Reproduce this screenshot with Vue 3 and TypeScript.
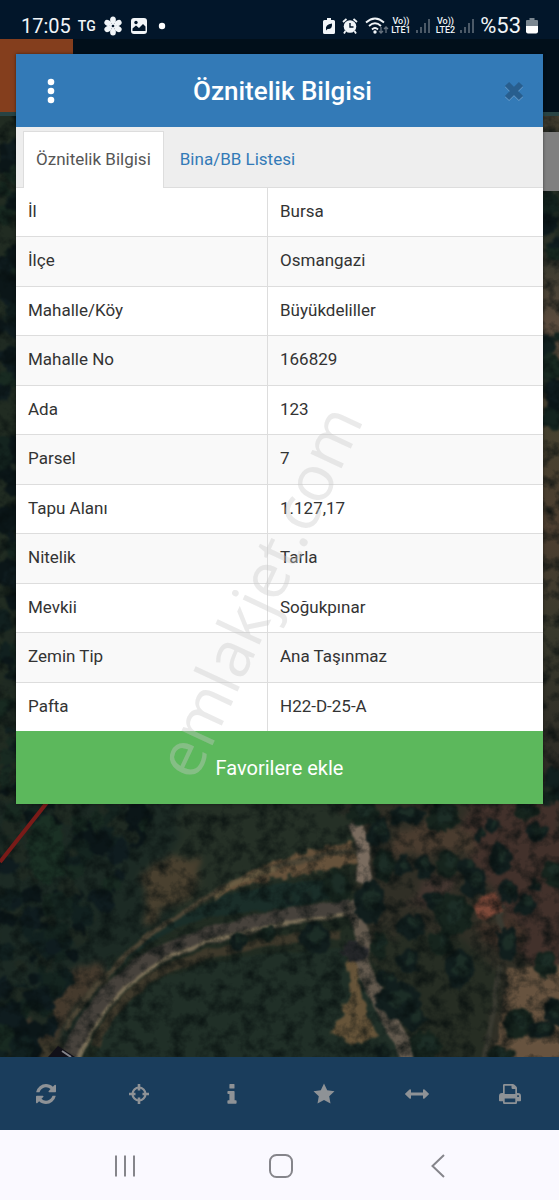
<script setup lang="ts">
import { ref } from 'vue'

interface Attribute {
  label: string
  value: string
}

const attributes: Attribute[] = [
  { label: 'İl', value: 'Bursa' },
  { label: 'İlçe', value: 'Osmangazi' },
  { label: 'Mahalle/Köy', value: 'Büyükdeliller' },
  { label: 'Mahalle No', value: '166829' },
  { label: 'Ada', value: '123' },
  { label: 'Parsel', value: '7' },
  { label: 'Tapu Alanı', value: '1.127,17' },
  { label: 'Nitelik', value: 'Tarla' },
  { label: 'Mevkii', value: 'Soğukpınar' },
  { label: 'Zemin Tip', value: 'Ana Taşınmaz' },
  { label: 'Pafta', value: 'H22-D-25-A' },
]

const tabs: string[] = ['Öznitelik Bilgisi', 'Bina/BB Listesi']
const activeTab = ref<number>(0)

// Tree crowns on the map: x, y, horizontal radius, vertical radius
type Crown = [number, number, number, number]
const crowns: Crown[] = [
  [362, 812, 15, 12], [378, 832, 12, 13], [405, 814, 18, 9], [443, 817, 17, 14],
  [492, 824, 7, 8], [479, 833, 4, 8], [525, 810, 12, 9], [536, 832, 12, 10],
  [500, 858, 11, 17], [382, 865, 11, 16], [401, 865, 9, 11], [423, 867, 10, 12],
  [446, 863, 12, 13], [465, 864, 9, 8], [473, 882, 13, 15], [336, 885, 15, 16],
  [369, 902, 16, 22], [433, 900, 10, 10], [452, 914, 19, 21], [508, 890, 11, 11],
  [525, 904, 10, 10], [554, 873, 13, 13], [534, 885, 6, 6], [410, 925, 14, 14],
  [440, 942, 11, 12], [408, 960, 11, 12], [506, 943, 10, 17], [545, 963, 10, 14],
  [314, 938, 15, 16], [458, 968, 13, 21], [378, 945, 8, 14], [397, 1000, 22, 18],
  [412, 1018, 12, 12], [518, 1023, 15, 16], [540, 1030, 11, 10], [554, 1012, 10, 15],
  [425, 1045, 16, 14], [383, 1051, 8, 8], [237, 941, 9, 8], [267, 933, 8, 7],
  [290, 900, 6, 5], [306, 895, 6, 6], [500, 1055, 14, 9], [385, 978, 10, 9],
]

// Small repeatable generator, so the woodland keeps its shape on every render
let seed = 17
function random(): number {
  seed = (seed * 16807) % 2147483647
  return seed / 2147483647
}

interface Blob { x: number; y: number; r: number; fill: string }
const shades: string[] = ['#0b1618', '#11201f', '#182a21', '#14241f', '#1f2a22', '#0f1c1f']
const woodland: Blob[] = Array.from({ length: 150 }, () => {
  const y = 800 + random() * 250
  const reach = 158 - (y - 800) * 0.5
  return { x: random() * reach, y, r: 4 + random() * 9, fill: shades[Math.floor(random() * 6)] }
})
const edges: Blob[] = Array.from({ length: 170 }, (_, i) => ({
  x: i % 2 ? 543 + random() * 18 : random() * 18,
  y: 115 + random() * 690,
  r: 4 + random() * 9,
  fill: shades[Math.floor(random() * 6)],
})).filter((b) => b.x < 100 || (b.y > 190 && b.y < 270) || (b.y > 335 && b.y < 420 && b.y % 50 > 15) || b.y > 770)
</script>

<template>
  <div class="screen">
    <div class="status">
      <div class="status-side">
        <span class="clock">17:05</span>
        <span class="tg">TG</span>
        <svg width="20" height="20" viewBox="0 0 20 20" fill="#f1f5f8">
          <g v-for="n in 6" :key="n" :transform="`rotate(${n * 60} 10 10)`">
            <ellipse cx="10" cy="4" rx="2.9" ry="3.6" />
            <path d="M9 6h2v3H9z" />
          </g>
          <circle cx="10" cy="10" r="3" />
          <circle cx="10" cy="10" r="1.3" fill="#02162a" />
        </svg>
        <svg width="18" height="18" viewBox="0 0 18 18">
          <rect x="1" y="1" width="16" height="16" rx="3" fill="#f1f5f8" />
          <circle cx="6" cy="5.5" r="1.7" fill="#02162a" />
          <path d="M2.5 14v-2.5l3.5-3 3 2.5 4-4 2.500 2.500V14z" fill="#02162a" />
        </svg>
        <svg class="dot" width="8" height="8" viewBox="0 0 8 8"><circle cx="4" cy="4" r="3.200" fill="#fff" /></svg>
      </div>
      <div class="status-side right">
        <svg width="12" height="18" viewBox="0 0 12 18">
          <path d="M4 1h4v2h2.500q1.500 0 1.500 1.500v11q0 1.500-1.500 1.500h-9Q0 17 0 15.500v-11Q0 3 1.500 3H4z" fill="#f1f5f8" />
          <path d="M3 12.500q-1-5 6-6 .5 6-4.500 5.500L3 13.500z" fill="#02162a" />
        </svg>
        <svg class="alarm" width="16" height="18" viewBox="0 0 16 18">
          <circle cx="8" cy="9.500" r="6.300" fill="#f1f5f8" />
          <path d="M1 5l3.500-3M15 5l-3.500-3M3.500 14L2 16.500M12.500 14l1.500 2.500" stroke="#f1f5f8" stroke-width="1.800" fill="none" />
          <path d="M8 6v4h3.500" stroke="#02162a" stroke-width="1.400" fill="none" />
        </svg>
        <svg class="wifi" width="24" height="18" viewBox="0 0 24 18" fill="none" stroke="#f1f5f8" stroke-width="1.800">
          <path d="M1 5.500q9-8 18 0M4 9q6-5.500 12 0M7 12.500q3-3 6 0" />
          <circle cx="10" cy="15" r=".8" />
          <path d="M16 10v6m-2-2l2 2 2-2M21 16v-6m-2 2l2-2 2 2" stroke="#687480" stroke-width="1.300" />
        </svg>
        <template v-for="line in ['LTE1', 'LTE2']" :key="line">
          <span class="lte"><span>Vo))</span><span>{{ line }}</span></span>
          <svg width="15" height="16" viewBox="0 0 15 16" fill="#4b5967">
            <path d="M0 12h2v3H0zM4 9h2v6H4zM8 5h2v10H8zM12 1h2v14h-2z" />
          </svg>
        </template>
        <span class="charge">%53</span>
        <svg class="battery" width="12" height="18" viewBox="0 0 12 18">
          <path d="M3.500 1h5v2H11q1 0 1 1v5H0V4q0-1 1-1h2.500z" fill="#7b8791" />
          <path d="M0 9h12v5.500q0 2-2 2H2q-2 0-2-2z" fill="#fff" />
        </svg>
      </div>
    </div>

    <main class="stage">
      <svg class="map" viewBox="0 39 559 1018" preserveAspectRatio="xMidYMax slice" color-interpolation-filters="sRGB" aria-hidden="true">
        <defs>
          <filter id="ground" x="0" y="0" width="100%" height="100%">
            <feTurbulence type="fractalNoise" baseFrequency="0.06" numOctaves="3" seed="4" result="n" />
            <feDisplacementMap in="SourceGraphic" in2="n" scale="24" xChannelSelector="R" yChannelSelector="G" />
            <feGaussianBlur stdDeviation="3" />
          </filter>
          <filter id="rough" x="0" y="0" width="100%" height="100%">
            <feTurbulence type="fractalNoise" baseFrequency="0.09" numOctaves="3" seed="4" result="n" />
            <feDisplacementMap in="SourceGraphic" in2="n" scale="13" xChannelSelector="R" yChannelSelector="G" />
            <feGaussianBlur stdDeviation="1.2" />
          </filter>
          <filter id="soft" x="-5%" y="-5%" width="110%" height="110%">
            <feTurbulence type="fractalNoise" baseFrequency="0.05" numOctaves="2" seed="8" result="n" />
            <feDisplacementMap in="SourceGraphic" in2="n" scale="6" xChannelSelector="R" yChannelSelector="G" />
            <feGaussianBlur stdDeviation="1" />
          </filter>
          <filter id="grain" x="0" y="0" width="100%" height="100%">
            <feTurbulence type="fractalNoise" baseFrequency="0.07" numOctaves="4" seed="11" />
            <feColorMatrix type="matrix" values="0 0 0 0 0.02  0 0 0 0 0.05  0 0 0 0 0.05  1.6 0 0 0 -0.65" />
          </filter>
          <linearGradient id="strip" x1="0" y1="0" x2="0" y2="1">
            <stop offset="0" stop-color="#453e30" /><stop offset=".14" stop-color="#1e2b22" />
            <stop offset=".3" stop-color="#5a4b3d" /><stop offset=".45" stop-color="#45412f" />
            <stop offset=".6" stop-color="#4d3e30" /><stop offset=".75" stop-color="#38392c" />
            <stop offset="1" stop-color="#2b2824" />
          </linearGradient>
        </defs>
        <rect y="39" width="559" height="1018" fill="#212c22" />
        <rect x="530" y="115" width="29" height="690" fill="url(#strip)" />
        <g filter="url(#ground)">
          <path d="M-10 800h230l-40 110-70 60-50 87H-10z" fill="#1c2a24" />
          <path d="M180 795h180v60l-190 70z" fill="#253026" />
          <path d="M345 795h225v270H410l-40-110z" fill="#302f26" />
          <path d="M465 800h100v190l-50-40-20-60-30-30z" fill="#42312b" />
          <path d="M380 930l90 10 30 40-15 80h-70l-40-80z" fill="#262d23" />
          <path d="M395 830q40-12 80 0v24h-80z" fill="#4a3c2f" />
          <path d="M145 875q25-25 50-20l8 20-15 25-45 25z" fill="#49402f" />
          <path d="M20 1030l55-60 20-10 15 12-65 75z" fill="#453a2d" />
          <path d="M0 1040h60v20H0z" fill="#3e392b" />
          <path d="M418 880l20-6 20 10-10 12-38 14z" fill="#443630" />
          <path d="M478 925l22-6 30 5-20 30-25-10z" fill="#44342a" />
        </g>
        <g filter="url(#rough)">
          <path d="M213 899q50-45 138-56l8 18q-55 15-90 18-30 6-46 18z" fill="#66523b" />
          <path d="M509 969l60-3v100h-76z" fill="#67533f" />
          <circle v-for="(b, i) in woodland" :key="`w${i}`" :cx="b.x" :cy="b.y" :r="b.r" :fill="b.fill" />
          <circle v-for="(b, i) in edges" :key="`e${i}`" :cx="b.x" :cy="b.y" :r="b.r" :fill="b.fill" />
          <path d="M35 815l26 8 3 50-22 12-15-22z" fill="#1a3024" />
        </g>
        <g filter="url(#soft)" fill="none">
          <path d="M90 1062q30-65 80-87 70-25 170-26l35 55 30 58z" fill="#202f27" />
          <path d="M95 1045q30-60 80-80 75-27 165-30" stroke="#3e392b" stroke-width="9" />
          <path d="M100 985q60-62 125-70 60-4 105-17v-18q-70 2-115 20-60 25-115 85z" fill="#1a2e29" />
          <path d="M65 1030q45-75 120-118 30-25 80-42 40-12 90-20" stroke="#4d4636" stroke-width="5" />
          <path d="M215 897q25-20 60-28" stroke="#6b5d43" stroke-width="5" />
          <path d="M66 1062q30-70 80-100 65-36 205-55" stroke="#47423c" stroke-width="17" />
          <path d="M78 1060q28-65 78-95 50-32 190-51" stroke="#7a6f58" stroke-width="4" />
          <path d="M354 822q14 22 9 61" stroke="#7a6c5f" stroke-width="14" />
          <path d="M348 905q20 18 13 55 10 28 26 55 15 20 22 48" stroke="#645a4e" stroke-width="16" />
          <path d="M503 930q-8-12 0-25M500 965l-16 95" stroke="#3a3a31" stroke-width="5" />
          <path d="M474 905l6-7 16-6 7 20-15 7-10-1z" fill="#7e4939" />
        </g>
        <g filter="url(#rough)">
          <path d="M346 955l12 8 4 36 16 38-26 8-20-12 10-22 8-16z" fill="#665439" />
          <ellipse v-for="([x, y, rx, ry], i) in crowns" :key="i" :cx="x + 1" :cy="y + 1" :rx="rx" :ry="ry" :fill="i % 3 ? '#111e1d' : '#16241d'" />
          <ellipse v-for="([x, y, rx, ry], i) in crowns" :key="`h${i}`" :cx="x + 3" :cy="y - 2" :rx="rx / 2" :ry="ry / 2" fill="#1c2d26" />
          <ellipse cx="356" cy="952" rx="14" ry="10" fill="#28292c" />
        </g>
        <rect y="39" width="559" height="1018" filter="url(#grain)" />
        <path d="M0 862L49 800" stroke="#791b18" stroke-width="4" />
        <path d="M48 1057l10-11 17 11z" fill="#111018" />
        <path d="M62 1051l9 6" stroke="#85858b" stroke-width="2" />
      </svg>
      <div class="app-bar"><div class="app-bar-menu"></div></div>
      <div class="map-control"></div>

      <section class="dialog" role="dialog" aria-labelledby="dialog-title">
        <header class="dialog-head">
          <button class="icon-button" type="button" aria-label="Menü">
            <svg width="8" height="26" viewBox="0 0 8 26" fill="#fff">
              <circle cx="4" cy="4" r="3.300" /><circle cx="4" cy="13" r="3.300" /><circle cx="4" cy="22" r="3.300" />
            </svg>
          </button>
          <h1 id="dialog-title">Öznitelik Bilgisi</h1>
          <button class="icon-button" type="button" aria-label="Kapat">
            <svg width="20" height="22" viewBox="0 0 20 22" fill="none" stroke-width="6">
              <path d="M3 5l14 14M17 5L3 19" stroke="#6a9cc9" />
              <path d="M3 4l14 14M17 4L3 18" stroke="#285e8e" />
            </svg>
          </button>
        </header>
        <div class="tabs" role="tablist">
          <button v-for="(tab, i) in tabs" :key="tab" type="button" role="tab" class="tab" :class="{ active: activeTab === i }" :aria-selected="activeTab === i" @click="activeTab = i">{{ tab }}</button>
        </div>
        <table class="attributes">
          <tbody>
            <tr v-for="row in attributes" :key="row.label">
              <th scope="row">{{ row.label }}</th>
              <td>{{ row.value }}</td>
            </tr>
          </tbody>
        </table>
        <button class="favorite" type="button">Favorilere ekle</button>
        <span class="watermark">emlakjet.com</span>
      </section>
    </main>

    <nav class="toolbar" aria-label="Harita araçları">
      <button type="button" aria-label="Yenile">
        <svg width="20" height="20" viewBox="0 0 1536 1536"><path d="M1511 928q0 5-1 7-64 268-268 434.500T764 1536q-146 0-282.500-55T238 1324l-129 129q-19 19-45 19t-45-19-19-45V960q0-26 19-45t45-19h448q26 0 45 19t19 45-19 45l-137 137q71 66 161 102t187 36q134 0 250-65t186-179q11-17 53-117 8-23 30-23h192q13 0 22.500 9.500t9.500 22.500zm25-800v448q0 26-19 45t-45 19h-448q-26 0-45-19t-19-45 19-45l138-138Q969 256 768 256q-134 0-250 65T332 500q-11 17-53 117-8 23-30 23H50q-13 0-22.500-9.500T18 608v-7q65-268 270-434.500T768 0q146 0 284 55.500T1297 212l130-129q19-19 45-19t45 19 19 45z" /></svg>
      </button>
      <button type="button" aria-label="Konum">
        <svg width="20" height="20" viewBox="0 0 20 20">
          <circle cx="10" cy="10" r="6.500" fill="none" stroke="#8e9296" stroke-width="2.200" />
          <path d="M8.700 0h2.600v6.500H8.700zM8.700 13.500h2.600V20H8.700zM0 8.700h6.500v2.600H0zM13.500 8.700H20v2.600h-6.500z" />
        </svg>
      </button>
      <button type="button" aria-label="Bilgi">
        <svg width="10" height="20" viewBox="0 0 10 20"><path d="M3 0h4q.5 0 .5.5V4q0 .6-.5.6H3q-.6 0-.6-.6V.5Q2.400 0 3 0zM1.200 7h5.700q.7 0 .7.700v8.600h1.200q.8 0 .8.700v2q0 .7-.8.700H1.200q-.8 0-.8-.7v-2q0-.7.800-.7h1.200V10H1.200q-.8 0-.8-.7V7.700q0-.7.800-.7z" /></svg>
      </button>
      <button type="button" aria-label="Favoriler">
        <svg width="22" height="22" viewBox="0 0 22 22"><path d="M11 .5l3.200 6.700 7.300 1-5.300 5.100 1.300 7.300L11 17.100l-6.500 3.500 1.300-7.300L.5 8.200l7.300-1z" /></svg>
      </button>
      <button type="button" aria-label="Ölç">
        <svg width="24" height="12" viewBox="0 0 24 12"><path d="M.3 5.500L4.500 1.500q1.200-.9 1.500.5v2.600h12V2q.3-1.400 1.500-.5l4.200 4q.5.500 0 1l-4.200 4q-1.200.9-1.500-.5V7.400H6V10q-.3 1.400-1.500.5L.3 6.500q-.5-.5 0-1z" /></svg>
      </button>
      <button type="button" aria-label="Yazdır">
        <svg width="22" height="20" viewBox="0 0 22 20"><path fill-rule="evenodd" d="M4 9V1.200Q4 0 5.200 0h8.500q1 0 1.800.8l1.800 1.800q.7.700.7 1.700V9h1q3 0 3 3v4.500q0 .8-.8.800H18v1.500q0 1.200-1.200 1.200H5.200Q4 20 4 18.800v-1.500H.8q-.8 0-.8-.8V12q0-3 3-3zm1.700 1h10.600V5h-2.600q-1.200 0-1.200-1.200V1.700H5.700zm0 4.500v3.800h10.600v-3.800zm12.500-3.200v1.600h1.700v-1.600z" /></svg>
      </button>
    </nav>

    <nav class="system-nav" aria-label="Sistem">
      <button type="button" aria-label="Son uygulamalar">
        <svg width="24" height="24" viewBox="0 0 24 24"><path d="M3 1.500v21M12 1.500v21M21 1.500v21" /></svg>
      </button>
      <button type="button" aria-label="Ana ekran">
        <svg width="24" height="24" viewBox="0 0 24 24"><rect x="1" y="1" width="22" height="22" rx="6.500" /></svg>
      </button>
      <button type="button" aria-label="Geri">
        <svg width="24" height="24" viewBox="0 0 24 24"><path d="M19 1L7.500 12 19 23" /></svg>
      </button>
    </nav>
  </div>
</template>

<style>
body {
  margin: 0;
  background: #faf9ff;
}
</style>

<style scoped>
.screen {
  display: flex;
  flex-direction: column;
  min-height: 100vh;
  font-family: Roboto, "Noto Sans", sans-serif;
  color: #333;
}

button {
  margin: 0;
  padding: 0;
  border: 0;
  background: none;
  font: inherit;
  color: inherit;
  cursor: pointer;
}

svg {
  display: block;
  flex: none;
}

.status {
  display: flex;
  justify-content: space-between;
  align-items: center;
  box-sizing: border-box;
  height: 39px;
  padding: 12px 21px 0 21px;
  background: #02162a;
  color: #f1f5f8;
}

.status-side {
  display: flex;
  align-items: center;
  gap: 7px;
}

.status-side.right {
  gap: 5px;
}

.clock {
  font-size: 20px;
  line-height: 24px;
}

.tg {
  font-size: 14px;
  font-weight: 500;
}

.dot {
  margin-left: 3px;
}

.alarm {
  margin: 0 2px;
}

.wifi {
  margin-right: -3px;
}

.lte {
  display: flex;
  flex-direction: column;
  align-items: center;
  font-size: 9px;
  line-height: 9px;
  font-weight: 500;
}

.charge {
  font-size: 22px;
  line-height: 24px;
}

.stage {
  position: relative;
  flex: 1;
  padding: 15px 16px 0;
  overflow: hidden;
}

.map {
  position: absolute;
  inset: 0;
  width: 100%;
  height: 100%;
}

.app-bar {
  position: absolute;
  top: 0;
  left: 0;
  right: 0;
  height: 73px;
  background: #010f1a;
  border-bottom: 4px solid #284344;
}

.app-bar-menu {
  width: 73px;
  height: 100%;
  background: #843e1d;
}

.map-control {
  position: absolute;
  top: 93px;
  right: 0;
  width: 20px;
  height: 59px;
  background: #7f7f7f;
}

.dialog {
  position: relative;
  background: #fff;
  box-shadow: 0 0 3px rgba(0, 0, 0, 0.5);
}

.dialog-head {
  display: flex;
  align-items: center;
  justify-content: space-between;
  height: 73px;
  padding: 0 11px 0 17px;
  background: #337ab7;
  color: #fff;
}

.dialog-head h1 {
  flex: 1;
  margin: 0;
  text-align: center;
  font-size: 26px;
  line-height: 32px;
  font-weight: 500;
}

.icon-button {
  display: grid;
  place-items: center;
  width: 36px;
  height: 44px;
}

.tabs {
  display: flex;
  box-sizing: border-box;
  height: 61px;
  padding: 4px 7px 0;
  background: #eee;
  border-bottom: 1px solid #ddd;
}

.tab {
  margin: 0 3px -1px 0;
  padding: 0 12px 3px;
  border: 1px solid transparent;
  border-bottom: 0;
  font-size: 17px;
  line-height: 24px;
  color: #337ab7;
}

.tab.active {
  background: #fff;
  border-color: #ddd;
  color: #555;
}

.attributes {
  width: 100%;
  height: 543px;
  border-collapse: collapse;
  table-layout: fixed;
  font-size: 17px;
  line-height: 24px;
}

.attributes tr:nth-child(even) {
  background: #f9f9f9;
}

.attributes tr + tr {
  border-top: 1px solid #ddd;
}

.attributes th,
.attributes td {
  padding: 0 12px 2px;
  text-align: left;
  font-weight: 400;
}

.attributes th {
  width: 227px;
  border-right: 1px solid #ddd;
}

.favorite {
  display: block;
  width: 100%;
  height: 73px;
  background: #5cb85c;
  color: #fff;
  font-size: 20px;
  line-height: 24px;
}

.watermark {
  position: absolute;
  left: 46%;
  top: 537px;
  transform: translate(-50%, -50%) rotate(-65deg);
  font-family: "Open Sans", sans-serif;
  font-size: 64px;
  font-weight: 500;
  line-height: 80px;
  color: rgba(200, 200, 200, 0.38);
  pointer-events: none;
}

.toolbar {
  display: grid;
  grid-template-columns: repeat(6, 1fr);
  height: 73px;
  padding-right: 3px;
  background: #1a3d5c;
}

.toolbar button {
  display: grid;
  place-items: center;
}

.toolbar svg {
  fill: #8e9296;
}

.system-nav {
  display: grid;
  grid-template-columns: repeat(3, 1fr);
  height: 70px;
  padding: 0 44px 0 47px;
  background: #faf9ff;
}

.system-nav button {
  display: grid;
  place-items: center;
  padding-top: 2px;
}

.system-nav svg {
  fill: none;
  stroke: #85858b;
  stroke-width: 2;
}
</style>
